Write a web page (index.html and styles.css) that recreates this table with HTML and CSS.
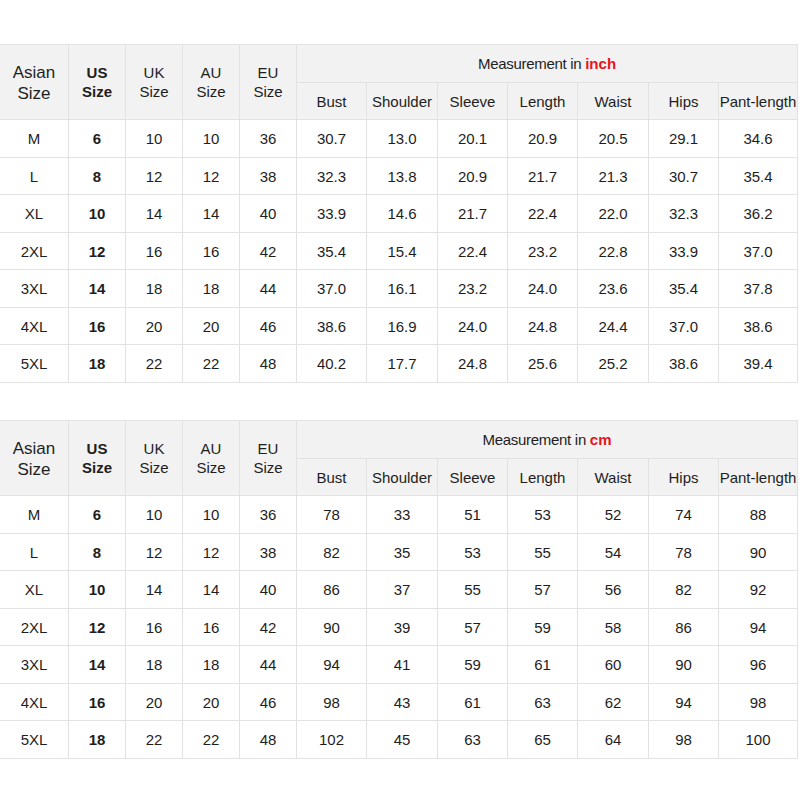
FILE: index.html
```html
<!DOCTYPE html>
<html>
<head>
<meta charset="utf-8">
<link rel="stylesheet" href="styles.css">
</head>
<body>
<div class="page">
<table class="chart">
  <colgroup>
    <col class="c-asian"><col class="c-sz"><col class="c-sz"><col class="c-sz"><col class="c-sz">
    <col class="c-m"><col class="c-w"><col class="c-m"><col class="c-m"><col class="c-w"><col class="c-m"><col class="c-last">
  </colgroup>
  <thead>
    <tr class="h1">
      <th rowspan="2" class="asian">Asian<br>Size</th>
      <th rowspan="2" class="us">US<br>Size</th>
      <th rowspan="2" class="sz">UK<br>Size</th>
      <th rowspan="2" class="sz">AU<br>Size</th>
      <th rowspan="2" class="sz">EU<br>Size</th>
      <th colspan="7" class="meas">Measurement in <span class="unit">inch</span></th>
    </tr>
    <tr class="h2">
      <th>Bust</th><th>Shoulder</th><th>Sleeve</th><th>Length</th><th>Waist</th><th>Hips</th><th>Pant-length</th>
    </tr>
  </thead>
  <tbody>
    <tr class="ra"><td>M</td><td class="b">6</td><td>10</td><td>10</td><td>36</td><td>30.7</td><td>13.0</td><td>20.1</td><td>20.9</td><td>20.5</td><td>29.1</td><td>34.6</td></tr>
    <tr class="rb"><td>L</td><td class="b">8</td><td>12</td><td>12</td><td>38</td><td>32.3</td><td>13.8</td><td>20.9</td><td>21.7</td><td>21.3</td><td>30.7</td><td>35.4</td></tr>
    <tr class="ra"><td>XL</td><td class="b">10</td><td>14</td><td>14</td><td>40</td><td>33.9</td><td>14.6</td><td>21.7</td><td>22.4</td><td>22.0</td><td>32.3</td><td>36.2</td></tr>
    <tr class="rb"><td>2XL</td><td class="b">12</td><td>16</td><td>16</td><td>42</td><td>35.4</td><td>15.4</td><td>22.4</td><td>23.2</td><td>22.8</td><td>33.9</td><td>37.0</td></tr>
    <tr class="ra"><td>3XL</td><td class="b">14</td><td>18</td><td>18</td><td>44</td><td>37.0</td><td>16.1</td><td>23.2</td><td>24.0</td><td>23.6</td><td>35.4</td><td>37.8</td></tr>
    <tr class="rb"><td>4XL</td><td class="b">16</td><td>20</td><td>20</td><td>46</td><td>38.6</td><td>16.9</td><td>24.0</td><td>24.8</td><td>24.4</td><td>37.0</td><td>38.6</td></tr>
    <tr class="ra"><td>5XL</td><td class="b">18</td><td>22</td><td>22</td><td>48</td><td>40.2</td><td>17.7</td><td>24.8</td><td>25.6</td><td>25.2</td><td>38.6</td><td>39.4</td></tr>
  </tbody>
</table>

<table class="chart">
  <colgroup>
    <col class="c-asian"><col class="c-sz"><col class="c-sz"><col class="c-sz"><col class="c-sz">
    <col class="c-m"><col class="c-w"><col class="c-m"><col class="c-m"><col class="c-w"><col class="c-m"><col class="c-last">
  </colgroup>
  <thead>
    <tr class="h1">
      <th rowspan="2" class="asian">Asian<br>Size</th>
      <th rowspan="2" class="us">US<br>Size</th>
      <th rowspan="2" class="sz">UK<br>Size</th>
      <th rowspan="2" class="sz">AU<br>Size</th>
      <th rowspan="2" class="sz">EU<br>Size</th>
      <th colspan="7" class="meas">Measurement in <span class="unit">cm</span></th>
    </tr>
    <tr class="h2">
      <th>Bust</th><th>Shoulder</th><th>Sleeve</th><th>Length</th><th>Waist</th><th>Hips</th><th>Pant-length</th>
    </tr>
  </thead>
  <tbody>
    <tr class="ra"><td>M</td><td class="b">6</td><td>10</td><td>10</td><td>36</td><td>78</td><td>33</td><td>51</td><td>53</td><td>52</td><td>74</td><td>88</td></tr>
    <tr class="rb"><td>L</td><td class="b">8</td><td>12</td><td>12</td><td>38</td><td>82</td><td>35</td><td>53</td><td>55</td><td>54</td><td>78</td><td>90</td></tr>
    <tr class="ra"><td>XL</td><td class="b">10</td><td>14</td><td>14</td><td>40</td><td>86</td><td>37</td><td>55</td><td>57</td><td>56</td><td>82</td><td>92</td></tr>
    <tr class="rb"><td>2XL</td><td class="b">12</td><td>16</td><td>16</td><td>42</td><td>90</td><td>39</td><td>57</td><td>59</td><td>58</td><td>86</td><td>94</td></tr>
    <tr class="ra"><td>3XL</td><td class="b">14</td><td>18</td><td>18</td><td>44</td><td>94</td><td>41</td><td>59</td><td>61</td><td>60</td><td>90</td><td>96</td></tr>
    <tr class="rb"><td>4XL</td><td class="b">16</td><td>20</td><td>20</td><td>46</td><td>98</td><td>43</td><td>61</td><td>63</td><td>62</td><td>94</td><td>98</td></tr>
    <tr class="ra"><td>5XL</td><td class="b">18</td><td>22</td><td>22</td><td>48</td><td>102</td><td>45</td><td>63</td><td>65</td><td>64</td><td>98</td><td>100</td></tr>
  </tbody>
</table>
</div>
</body>
</html>
```

FILE: styles.css
```css
html, body {
  margin: 0;
  padding: 0;
  background: #ffffff;
}

body {
  font-family: "Liberation Sans", Arial, sans-serif;
  color: #1e1e1e;
  overflow: hidden;
}

.page {
  padding-top: 44px;
  display: flex;
  flex-direction: column;
  align-items: flex-start;
  gap: 37px;
}

.chart {
  border-collapse: collapse;
  table-layout: fixed;
  width: 798px;
  margin-left: -1px;
}

.c-asian { width: 69px; }
.c-sz { width: 57px; }
.c-m { width: 70px; }
.c-w { width: 71px; }
.c-last { width: 79px; }

.chart th,
.chart td {
  border: 1px solid #e2e2e2;
  text-align: center;
  vertical-align: middle;
  padding: 0;
  font-size: 15px;
  font-weight: normal;
  white-space: nowrap;
  overflow: hidden;
}

.chart th {
  background: #f2f2f2;
}

.h1 { height: 38px; }
.h2 { height: 37px; }
.ra { height: 38px; }
.rb { height: 37px; }

.chart .asian {
  font-size: 17px;
  line-height: 21px;
  padding-top: 2px;
}

.chart .us {
  font-weight: bold;
  line-height: 19px;
}

.chart .sz {
  line-height: 19px;
}

.chart .meas {
  font-size: 15px;
  letter-spacing: -0.3px;
}

.unit {
  color: #e8141b;
  font-weight: bold;
  letter-spacing: 0;
}

.chart td.b {
  font-weight: bold;
}
```
